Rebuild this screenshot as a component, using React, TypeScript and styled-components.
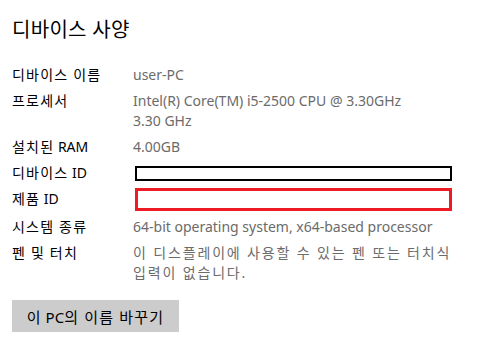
import React from "react";
import styled, {createGlobalStyle} from "styled-components";

const GlobalStyle = createGlobalStyle`
body {
    margin: 0;
    background: #fff;
    font-family: "Noto Sans", "Noto Sans CJK KR", sans-serif;
}
`
const Page = styled.div`
    padding: 16px 12px 0 12px;
    width: 486px;
    height: 360px;
    box-sizing: border-box;
    background: #fff;
`
const Title = styled.h1`
    margin: 0;
    font-size: 20px;
    font-weight: 400;
    line-height: 28px;
    letter-spacing: 0.3px;
    color: #000;
`
const Specs = styled.div`
    display: grid;
    grid-template-columns: 121px 340px;
    row-gap: 6px;
    margin-top: 21px;
    font-size: 14px;
    line-height: 20px;
`
const Label = styled.div`
    color: #000;
    white-space: nowrap;
`
const Value = styled.div`
    color: #6b6b6b;
    white-space: nowrap;
`
// hangul runs are wider in the original font
const Ko = styled.span<{ $ls: number }>`
    letter-spacing: ${p => p.$ls}px;
`
const Masked = styled.div<{ $red?: boolean }>`
    box-sizing: border-box;
    margin-left: 2px;
    width: 317px;
    height: ${p => p.$red ? "23px" : "15px"};
    margin-top: ${p => p.$red ? "-1px" : "3px"};
    border: ${p => p.$red ? "3px solid #ed1c24" : "2px solid #000"};
    background: #fff;
`
const RenameButton = styled.button`
    display: block;
    margin-top: 17px;
    width: 167px;
    height: 32px;
    border: none;
    background: #cccccc;
    color: #000;
    font-family: "Noto Sans", "Noto Sans CJK KR", sans-serif;
    font-size: 15px;
    padding: 0;
`

const KoText = ({text, ls}: { text: string, ls: number }) => {
    const parts = text.split(/([\uAC00-\uD7A3]+(?:\s+[\uAC00-\uD7A3]+)*)/)
    return <>{parts.map((p, i) => /[\uAC00-\uD7A3]/.test(p) ? <Ko key={i} $ls={ls}>{p}</Ko> : p)}</>
}

const specs: { label: string, value?: string[], box?: "black" | "red" }[] = [
    {label: "디바이스 이름", value: ["user-PC"]},
    {label: "프로세서", value: ["Intel(R) Core(TM) i5-2500 CPU @ 3.30GHz", "3.30 GHz"]},
    {label: "설치된 RAM", value: ["4.00GB"]},
    {label: "디바이스 ID", box: "black"},
    {label: "제품 ID", box: "red"},
    {label: "시스템 종류", value: ["64-bit operating system, x64-based processor"]},
    {label: "펜 및 터치", value: ["이 디스플레이에 사용할 수 있는 펜 또는 터치식", "입력이 없습니다."]},
]

const App = () => {
    return (<Page>
        <GlobalStyle/>
        <Title>디바이스 사양</Title>
        <Specs>
            {specs.map(s => (
                <React.Fragment key={s.label}>
                    <Label><KoText text={s.label} ls={1.2}/></Label>
                    {s.box
                        ? <div><Masked $red={s.box === "red"}/></div>
                        : <Value>{s.value!.map(v => <div key={v}><KoText text={v} ls={1.85}/></div>)}</Value>}
                </React.Fragment>
            ))}
        </Specs>
        <RenameButton><KoText text="이 PC의 이름 바꾸기" ls={1.2}/></RenameButton>
    </Page>)
}

export default App
